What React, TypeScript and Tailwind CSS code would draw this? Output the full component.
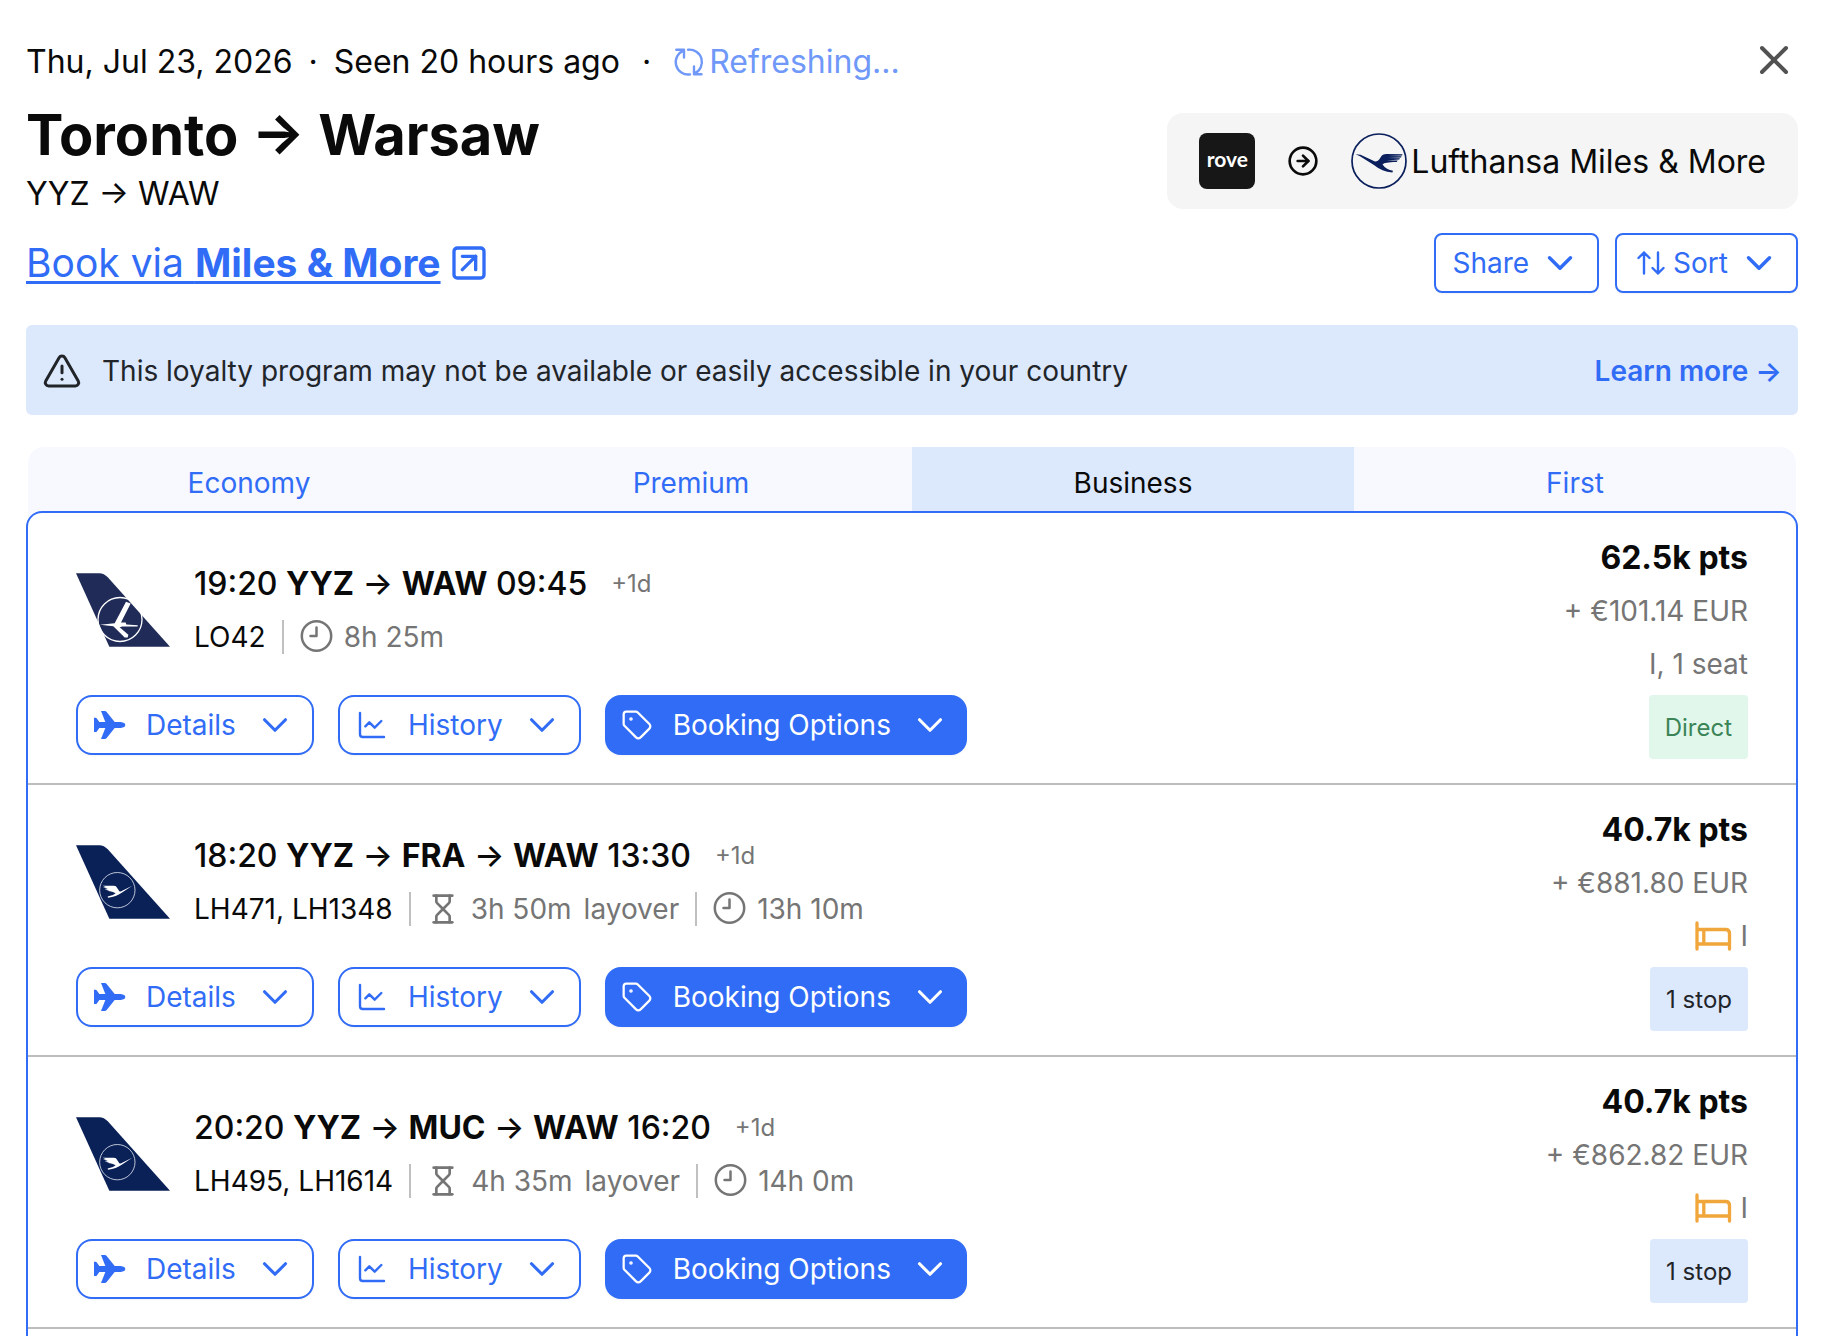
import React from 'react';
import {
  ChartLine,
  ChevronDown,
  CircleArrowRight,
  Hourglass,
  SquareArrowUpRight,
  Tag,
  TriangleAlert,
  X,
} from 'lucide-react';
import clsx from 'clsx';

type Flight = {
  airline: 'LO' | 'LH';
  departs: string;
  arrives: string;
  route: string[];
  numbers: string;
  layover?: string;
  duration: string;
  points: string;
  fees: string;
  fareClass: string;
  lieFlat?: boolean;
  stops: string;
};

const flights: Flight[] = [
  {
    airline: 'LO',
    departs: '19:20',
    arrives: '09:45',
    route: ['YYZ', 'WAW'],
    numbers: 'LO42',
    duration: '8h 25m',
    points: '62.5k pts',
    fees: '+ €101.14 EUR',
    fareClass: 'I, 1 seat',
    stops: 'Direct',
  },
  {
    airline: 'LH',
    departs: '18:20',
    arrives: '13:30',
    route: ['YYZ', 'FRA', 'WAW'],
    numbers: 'LH471, LH1348',
    layover: '3h 50m',
    duration: '13h 10m',
    points: '40.7k pts',
    fees: '+ €881.80 EUR',
    fareClass: 'I',
    lieFlat: true,
    stops: '1 stop',
  },
  {
    airline: 'LH',
    departs: '20:20',
    arrives: '16:20',
    route: ['YYZ', 'MUC', 'WAW'],
    numbers: 'LH495, LH1614',
    layover: '4h 35m',
    duration: '14h 0m',
    points: '40.7k pts',
    fees: '+ €862.82 EUR',
    fareClass: 'I',
    lieFlat: true,
    stops: '1 stop',
  },
];

const cabins = ['Economy', 'Premium', 'Business', 'First'];

const RefreshIcon = () => (
  <svg className="size-8" viewBox="0 0 32 32" fill="none" stroke="currentColor" strokeWidth="2.4" strokeLinecap="round" strokeLinejoin="round">
    <path d="M3.3 3.7H11V11.5M10.6 4.6A12.4 12.4 0 0 0 17 28.4" />
    <path d="M28.5 28.3H21V20.5M21.4 27.4A12.4 12.4 0 0 0 15 3.7" />
  </svg>
);

const SortIcon = () => (
  <svg className="h-6 w-7" viewBox="0 0 28 24" fill="none" stroke="currentColor" strokeWidth="2.4" strokeLinecap="round" strokeLinejoin="round">
    <path d="M7 22.5V1.5M1.5 7L7 1.5 12.5 7M21 1.5v21M15.5 17l5.5 5.5 5.5-5.5" />
  </svg>
);

const PlaneIcon = () => (
  <svg className="h-7 w-8" viewBox="0 0 96 84" fill="currentColor">
    <path d="M21 0h11q4 0 6 3L62 33H80Q94 35 94 42T80 51H62L38 81q-2 3-6 3H21L34 51H16L8 62Q7 63 5 63H0V20H5Q7 20 8 22L16 33H34Z" />
  </svg>
);

const ClockIcon = () => (
  <svg className="size-8 overflow-visible" viewBox="0 1 32 32" fill="none" stroke="currentColor" strokeWidth="2.5" strokeLinecap="round" strokeLinejoin="round">
    <circle cx="16.5" cy="16" r="14.7" />
    <path d="M16.5 7.5V16H10.5" />
  </svg>
);

const BedIcon = () => (
  <svg className="h-8 w-[37px]" viewBox="1 2 37 32" fill="none" stroke="currentColor" strokeWidth="3.3" strokeLinecap="round">
    <path d="M3 4v26M3 10.5h28.5q4 0 4 4v15.5M3 25h32M9.8 10.5v14.5" />
  </svg>
);

const LufthansaLogo = () => (
  <svg className="size-14" viewBox="0 0 56 56" fill="#0a1f5c">
    <circle cx="28" cy="28" r="27" fill="none" stroke="#0a1f5c" strokeWidth="1.7" />
    <path d="M4.5 21.2l5 .6 14.5 6.7c2.5 0 4-1.5 5.5-4 1.6-2.6 3-3.5 6-3.5l16 .2-.4 1.3-14 .4 13.5.3-.6 1.3-13.5.6 12.5.2-.8 1.3-12.5.8 11 .1-1 1.4c-9 .3-12.5.5-14.2 2.6 2.7 3.5 6 5.7 10.5 6.3l-.6 1.6c-7-.4-13-3-18.5-7.4L9 23.3z" />
  </svg>
);

const TailLogo = ({ airline }: { airline: Flight['airline'] }) => {
  if (airline === 'LO') {
    return (
      <svg className="h-[74px] w-[94px]" viewBox="0 0 282 221">
        <path d="M0 0H70Q84 0 96 13L282 221H100Z" fill="#202c57" />
        <circle cx="132" cy="139" r="66" fill="none" stroke="#fff" strokeWidth="4" />
        <path d="M72 155l44-5 34-64 14 5-29 57 14 0 2 6 34 2v4l-46 0-8 2 26 23-2 8-9 0-34-34z" fill="#fff" />
      </svg>
    );
  }
  return (
    <svg className="h-[74px] w-[94px]" viewBox="0 0 282 221">
      <path d="M0 0H70Q84 0 96 13L282 221H100Z" fill="#0a2157" />
      <circle cx="124" cy="135" r="53" fill="none" stroke="#dfe3ee" strokeWidth="2.5" />
      <path d="M80 122h33q8 0 11 7l6 9q4 2 10-2l29-14-32 21q-16 12-41 15l-1-4q16-2 24-10-8-5-17-6l-10-1 8-2-14-3 9-1-14-4 9-1z" fill="#fff" />
    </svg>
  );
};

type ActionButtonProps = {
  icon: React.ReactNode;
  label: string;
  primary?: boolean;
};

const ActionButton: React.FC<ActionButtonProps> = ({ icon, label, primary }) => (
  <button
    type="button"
    className={clsx(
      'flex h-[60px] items-center rounded-2xl pr-4 pl-4 text-[28px] shadow-xs',
      primary ? 'bg-[#316cf6] text-white' : 'border-2 border-[#316cf6] bg-white text-[#316cf6]'
    )}
  >
    <span className="flex w-8 justify-center">{icon}</span>
    <span className="mr-[18px] ml-5">{label}</span>
    <ChevronDown size={42} strokeWidth={1.8} />
  </button>
);

const Divider = () => <span className="h-[34px] w-[2px] bg-[#c0c0c0]" />;

const FlightRow = ({ flight }: { flight: Flight }) => (
  <li className="flex justify-between border-b-2 border-[#bdbdbd] pr-12 pb-6 pl-12">
    <div className="flex flex-col pt-11">
      <div className="flex items-center gap-6">
        <TailLogo airline={flight.airline} />
        <div>
          <div className="flex items-center gap-6 text-[32px] leading-[53px] font-medium">
            <span>
              {flight.departs} <b className="font-bold">{flight.route[0]}</b>
              {flight.route.slice(1).map((code) => (
                <React.Fragment key={code}>
                  {' → '}
                  <b className="font-bold">{code}</b>
                </React.Fragment>
              ))}{' '}
              {flight.arrives}
            </span>
            <span className="text-2xl font-normal text-[#757575]">+1d</span>
          </div>
          <div className="flex h-[53px] items-center gap-4 text-[28px] text-[#757575]">
            <span className="text-[#0a0a0a]">{flight.numbers}</span>
            {flight.layover && (
              <>
                <Divider />
                <span className="flex items-center gap-3">
                  <Hourglass size={32} strokeWidth={2} />
                  <span>{flight.layover}</span>
                  <span>layover</span>
                </span>
              </>
            )}
            <Divider />
            <span className="flex items-center gap-3">
              <ClockIcon />
              <span>{flight.duration}</span>
            </span>
          </div>
        </div>
      </div>
      <div className="mt-8 flex gap-6">
        <ActionButton icon={<PlaneIcon />} label="Details" />
        <ActionButton icon={<ChartLine size={32} strokeWidth={1.8} />} label="History" />
        <ActionButton
          icon={<Tag size={32} strokeWidth={1.7} />}
          label="Booking Options"
          primary
        />
      </div>
    </div>

    <div className="flex flex-col items-end pt-[18px] text-[28px] leading-[53px] text-[#757575]">
      <span className="text-[32px] leading-[54px] font-bold text-[#0a0a0a]">{flight.points}</span>
      <span>{flight.fees}</span>
      <span className="flex items-center gap-2">
        {flight.lieFlat && (
          <span className="text-[#f0a63b]">
            <BedIcon />
          </span>
        )}
        {flight.fareClass}
      </span>
      <span
        className={clsx(
          'mt-1 flex h-16 items-center rounded-sm px-4 pt-[2px] text-2xl',
          flight.stops === 'Direct' ? 'bg-[#e1f7eb] text-[#3b8457]' : 'bg-[#dce8fc] text-[#212529]'
        )}
      >
        {flight.stops}
      </span>
    </div>
  </li>
);

export default function App() {
  return (
    <main className="h-screen overflow-hidden bg-white pt-9 pr-[30px] pl-[26px] font-['Inter','Liberation_Sans',sans-serif] text-[#0a0a0a]">
      <header>
        <div className="flex h-12 items-center justify-between text-[32px]">
          <div className="flex items-center pt-1">
            <span>Thu, Jul 23, 2026</span>
            <span className="mx-4">·</span>
            <span>Seen 20 hours ago</span>
            <span className="mx-[22px]">·</span>
            <span className="flex items-center gap-1 text-[#6f98f9]">
              <RefreshIcon />
              Refreshing...
            </span>
          </div>
          <button type="button" aria-label="Close" className="text-[#525252]">
            <X size={48} strokeWidth={2} />
          </button>
        </div>

        <div className="mt-[18px] flex items-start justify-between">
          <div>
            <h1 className="text-[56px] leading-[66px] font-bold">Toronto → Warsaw</h1>
            <p className="text-[32px] leading-[52px]">YYZ → WAW</p>
          </div>
          <div className="mt-[11px] flex h-24 items-center gap-8 rounded-2xl bg-[#f5f5f5] px-8">
            <span className="flex size-14 items-center justify-center rounded-lg bg-[#171717] pb-1 font-['Lato',sans-serif] text-[21px] font-bold text-white">
              rove
            </span>
            <CircleArrowRight size={32} strokeWidth={2} />
            <span className="flex items-center gap-1 text-[32px]">
              <LufthansaLogo />
              <span className="pt-[2px]">Lufthansa Miles &amp; More</span>
            </span>
          </div>
        </div>

        <div className="mt-[13px] flex h-[60px] items-center justify-between text-[#316cf6]">
          <a href="#book" className="flex items-center gap-2 text-[39px]">
            <span className="underline decoration-[3px] underline-offset-4">
              Book via <b className="font-bold">Miles &amp; More</b>
            </span>
            <SquareArrowUpRight size={40} strokeWidth={2} />
          </a>
          <div className="flex gap-4 text-[28px]">
            <button
              type="button"
              className="flex h-[60px] items-center gap-[10px] rounded-lg border-2 border-[#316cf6] px-4 shadow-xs"
            >
              Share
              <ChevronDown size={42} strokeWidth={2} />
            </button>
            <button
              type="button"
              className="flex h-[60px] items-center rounded-lg border-2 border-[#316cf6] pr-4 pl-5 shadow-xs"
            >
              <SortIcon />
              <span className="mr-[10px] ml-2">Sort</span>
              <ChevronDown size={42} strokeWidth={2} />
            </button>
          </div>
        </div>
      </header>

      <div role="alert" className="mt-8 flex h-[90px] items-center rounded-md bg-[#dce8fc] px-4 pt-[2px] text-[28px] text-[#212529]">
        <TriangleAlert size={40} strokeWidth={1.8} />
        <span className="ml-5">
          This loyalty program may not be available or easily accessible in your country
        </span>
        <a href="#learn-more" className="ml-auto font-semibold text-[#316cf6]">
          Learn more →
        </a>
      </div>

      {/* Cabin tabs, tucked behind the rounded top of the list */}
      <div className="mt-8 px-[2px]">
        <div role="tablist" className="grid grid-cols-4 overflow-hidden rounded-t-2xl bg-[#f7f9fe] pb-4 text-[28px]">
          {cabins.map((cabin) => (
            <button
              key={cabin}
              type="button"
              role="tab"
              aria-selected={cabin === 'Business'}
              className={clsx(
                '-mb-4 h-20 pb-2',
                cabin === 'Business' ? 'bg-[#dce8fc] text-[#0a0a0a]' : 'text-[#316cf6]'
              )}
            >
              {cabin}
            </button>
          ))}
        </div>
      </div>

      <ul className="relative -mt-4 rounded-t-2xl border-2 border-b-0 border-[#316cf6] bg-white pb-10">
        {flights.map((flight) => (
          <FlightRow key={flight.numbers} flight={flight} />
        ))}
      </ul>
    </main>
  );
}
